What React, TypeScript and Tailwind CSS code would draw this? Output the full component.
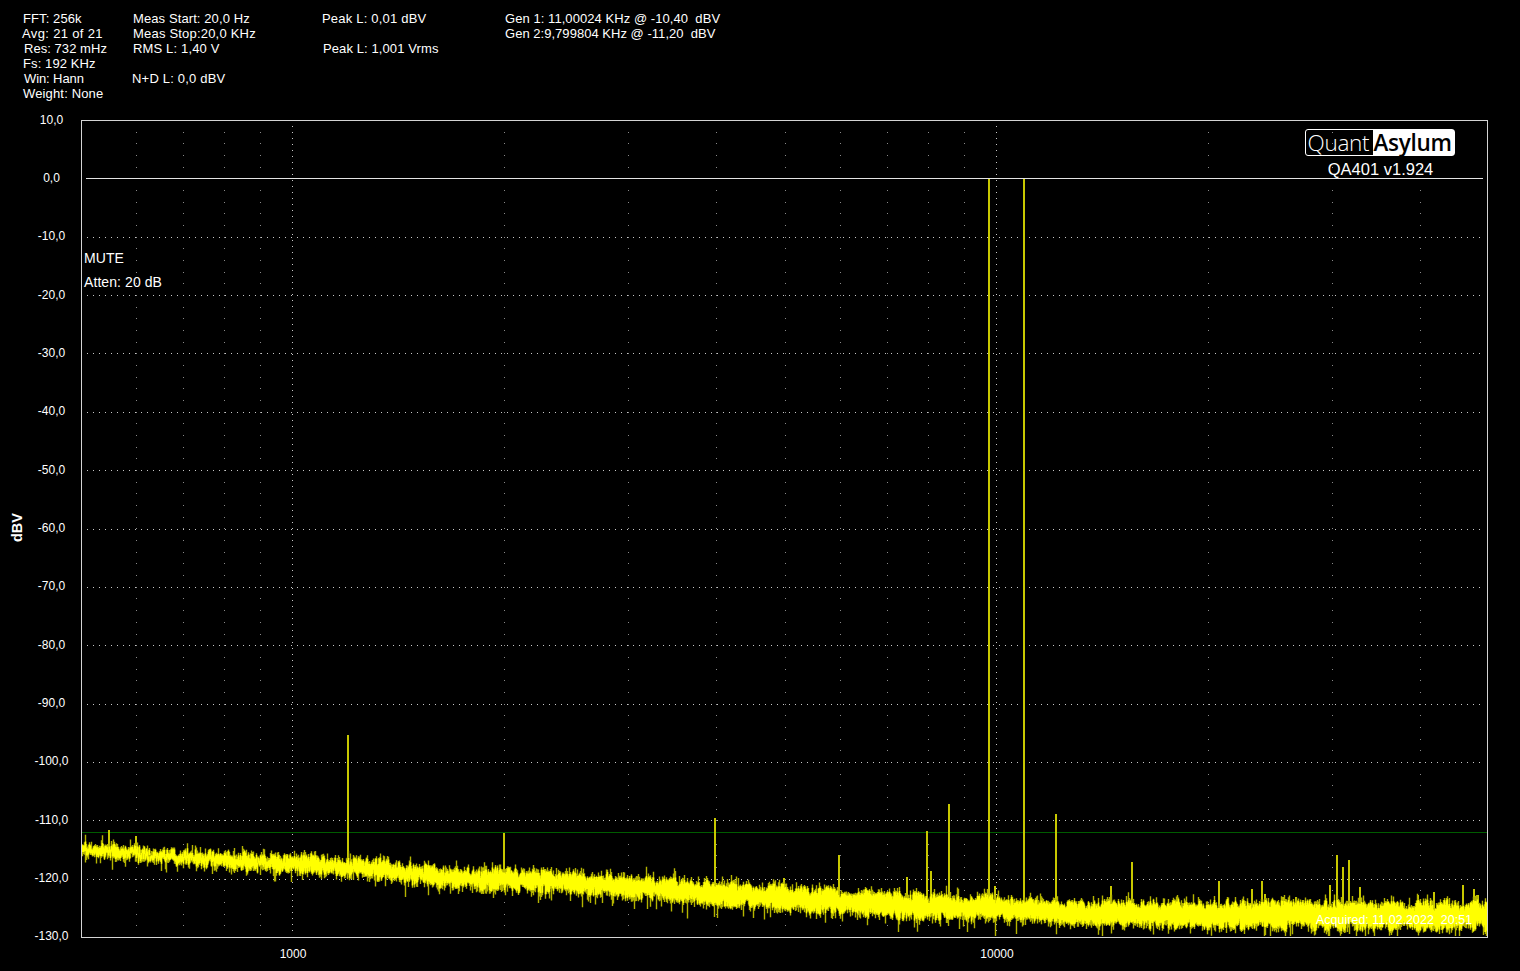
// QA401 spectrum view
const yLabels = ["10,0","0,0","-10,0","-20,0","-30,0","-40,0","-50,0","-60,0","-70,0","-80,0","-90,0","-100,0","-110,0","-120,0","-130,0"];

const spikes: [number, number][] = [
  [109, 830], [136, 836], [348, 735], [504, 833], [715, 818], [784, 878], [839, 855], [907, 877],
  [927, 831], [931, 871], [949, 804], [989, 178], [995, 886], [1024, 178], [1056, 814], [1111, 886],
  [1132, 862], [1219, 881], [1252, 889], [1262, 881], [1265, 894], [1283, 897], [1296, 897],
  [1330, 885], [1337, 855], [1343, 867], [1349, 860], [1360, 887], [1418, 895], [1434, 892],
  [1463, 885], [1474, 889], [1478, 895],
];

// x, centre y, half height of the noise band
const band = [
  [82, 849, 8], [200, 859, 9], [293, 864, 10], [390, 870, 10.5], [440, 877, 10.5], [540, 881, 11],
  [640, 888, 11], [690, 891, 11], [780, 898, 11.5], [920, 907, 12], [1000, 909, 11.5],
  [1100, 914, 11.5], [1300, 915, 13], [1488, 915.5, 13.5],
];

let seed = 401;
function rnd() {
  seed = (seed * 1664525 + 1013904223) % 4294967296;
  return seed / 4294967296;
}

function bandAt(x: number) {
  for (let i = 1; i < band.length; i++) {
    if (x <= band[i][0]) {
      const t = (x - band[i - 1][0]) / (band[i][0] - band[i - 1][0]);
      return [
        band[i - 1][1] + (band[i][1] - band[i - 1][1]) * t,
        band[i - 1][2] + (band[i][2] - band[i - 1][2]) * t,
      ];
    }
  }
  return [915.5, 13.5];
}

let coreD = "";
let edgeD = "";
let holdTop = 0;
let holdBot = 0;
for (let x = 82; x < 1487; x++) {
  const [c, h] = bandAt(x);
  const dense = Math.min(1, (x - 82) / 700);
  if (rnd() > 0.6) holdTop = (rnd() - 0.5) * h * 0.6;
  if (rnd() > 0.6) holdBot = (rnd() - 0.5) * h * 0.6;
  const off = (rnd() - 0.5) * h * 0.9 * (1 - dense);
  const top = c + off + holdTop - h * (0.6 + 0.4 * rnd()) * (0.55 + 0.45 * dense);
  const bot = c + off + holdBot + h * (0.6 + 0.4 * rnd()) * (0.55 + 0.45 * dense);
  const up = 1 + 6 * rnd() * rnd() + (rnd() > 0.9 ? 6 * rnd() : 0);
  const down = 1 + 7 * rnd() * rnd() + (rnd() > 0.88 ? 12 * rnd() : 0);
  coreD += `M${x + 0.5} ${top.toFixed(1)}V${bot.toFixed(1)}`;
  edgeD += `M${x + 0.5} ${(top - up).toFixed(1)}V${Math.min(936, bot + down).toFixed(1)}`;
}

function dotsAcross(y: number) {
  let d = "";
  for (let x = 87; x < 1484; x += 6) d += `M${x} ${y}h1v1h-1z`;
  return d;
}
function dotsDown(x: number, y0: number, y1: number, step: number) {
  let d = "";
  for (let y = y0; y < y1; y += step) d += `M${x} ${Math.round(y)}h1v1h-1z`;
  return d;
}

const freqX = (f: number) => Math.round(292.5 + 703.9 * Math.log10(f / 1000));

let majorDots = dotsDown(292, 126, 932, 6) + dotsDown(996, 126, 932, 6);
for (let k = 1; k <= 12; k++) majorDots += dotsAcross(Math.round(178.4 + 58.35 * k));

let minorDots = "";
[600, 700, 800, 900, 2000, 3000, 4000, 5000, 6000, 7000, 8000, 9000, 20000, 30000, 40000].forEach((f) => {
  minorDots += dotsDown(freqX(f), 131.7, 928, 11.67);
});

function Line({ text, className = "" }: { text?: string; className?: string }) {
  return <div className={`h-[15px] whitespace-pre ${className}`}>{text}</div>;
}

export default function App() {
  return (
    <div className="w-[1520px] h-[971px] bg-black text-white overflow-hidden font-['Liberation_Sans',Arial,sans-serif]">
      <header className="h-[120px] flex pt-[11px] text-[13px] leading-[15px]">
        <div className="w-[132px] pl-[22px]">
          <Line text="FFT: 256k" className="ml-[1px] tracking-[0.1px]" />
          <Line text="Avg: 21 of 21" className="tracking-[0.35px]" />
          <Line text="Res: 732 mHz" className="ml-[2px] tracking-[0.05px]" />
          <Line text="Fs: 192 KHz" className="ml-[1px] tracking-[0.1px]" />
          <Line text="Win: Hann" className="ml-[2px] tracking-[-0.1px]" />
          <Line text="Weight: None" className="ml-[1px] tracking-[0.15px]" />
        </div>
        <div className="w-[190px]">
          <Line text="Meas Start: 20,0 Hz" className="ml-[1px] tracking-[0.1px]" />
          <Line text="Meas Stop:20,0 KHz" className="ml-[1px] tracking-[0.2px]" />
          <Line text="RMS L: 1,40 V" className="ml-[1px] tracking-[0.15px]" />
          <Line />
          <Line text="N+D L: 0,0 dBV" className="tracking-[0.2px]" />
        </div>
        <div className="w-[183px]">
          <Line text="Peak L: 0,01 dBV" className="tracking-[0.2px]" />
          <Line />
          <Line text="Peak L: 1,001 Vrms" className="ml-[1px] tracking-[0.1px]" />
        </div>
        <div>
          <Line text="Gen 1: 11,00024 KHz @ -10,40  dBV" className="tracking-[0.06px]" />
          <Line text="Gen 2:9,799804 KHz @ -11,20  dBV" className="tracking-[0.03px]" />
        </div>
      </header>

      <div className="flex items-start h-[818px]">
        <div className="w-[22px] h-full flex items-center justify-center pl-[12px] pb-[4px]">
          <span className="[writing-mode:vertical-rl] rotate-180 text-[14.5px] font-bold leading-none">dBV</span>
        </div>
        <div className="w-[59px] h-[832.6px] -mt-[8.4px] flex flex-col justify-between text-center text-[12px] leading-[16px]">
          {yLabels.map((l) => (
            <div key={l} className="h-[16px]">{l}</div>
          ))}
        </div>

        <div className="relative w-[1407px] h-[818px] border border-[#d4d4d4]">
          <svg className="absolute inset-0 w-[1405px] h-[816px]" viewBox="82 121 1405 816">
            <path d={minorDots} fill="#8a8a8a" shapeRendering="crispEdges" />
            <path d={majorDots} fill="#c8c8c8" shapeRendering="crispEdges" />
            <rect x="82" y="832" width="1405" height="1" fill="#005c00" shapeRendering="crispEdges" />
            {spikes.map(([x, top]) => (
              <rect key={x} x={x - 1} y={top} width="2" height={bandAt(x)[0] - top} fill="#c8c800" shapeRendering="crispEdges" />
            ))}
            <path d={edgeD} stroke="#b4b400" strokeWidth="1.4" fill="none" />
            <path d={coreD} stroke="#ffff00" strokeWidth="1.6" fill="none" />
            <rect x="86" y="178" width="1397" height="1" fill="#e4e4e4" shapeRendering="crispEdges" />
          </svg>

          <div className="absolute left-[2px] top-[125px] text-[14px] leading-[24px] tracking-[0.08px]">
            <div>MUTE</div>
            <div>Atten: 20 dB</div>
          </div>

          <div className="absolute left-[1222px] top-[8px] w-[151px] flex flex-col items-center">
            <div className="w-[150px] h-[27px] flex rounded-[3px] border border-white font-['Open_Sans',sans-serif] text-[22.5px] leading-[25px]">
              <div className="w-[67px] pl-[2px] font-light text-white tracking-[-0.3px]">Quant</div>
              <div className="flex-1 bg-white text-black font-semibold pl-[1px] tracking-[-0.3px]">Asylum</div>
            </div>
            <div className="mt-[3px] pl-[2px] text-[16.5px] leading-[20px]">QA401 v1.924</div>
          </div>

          <div className="absolute left-[1234px] top-[791px] text-[12.5px] leading-[16px] whitespace-pre">Acquired: 11.02.2022  20:51</div>
        </div>
      </div>

      <div className="flex gap-[664px] pl-[273px] pt-[8px] text-[12px] leading-[16px]">
        <div className="w-[40px] text-center">1000</div>
        <div className="w-[40px] text-center">10000</div>
      </div>
    </div>
  );
}
